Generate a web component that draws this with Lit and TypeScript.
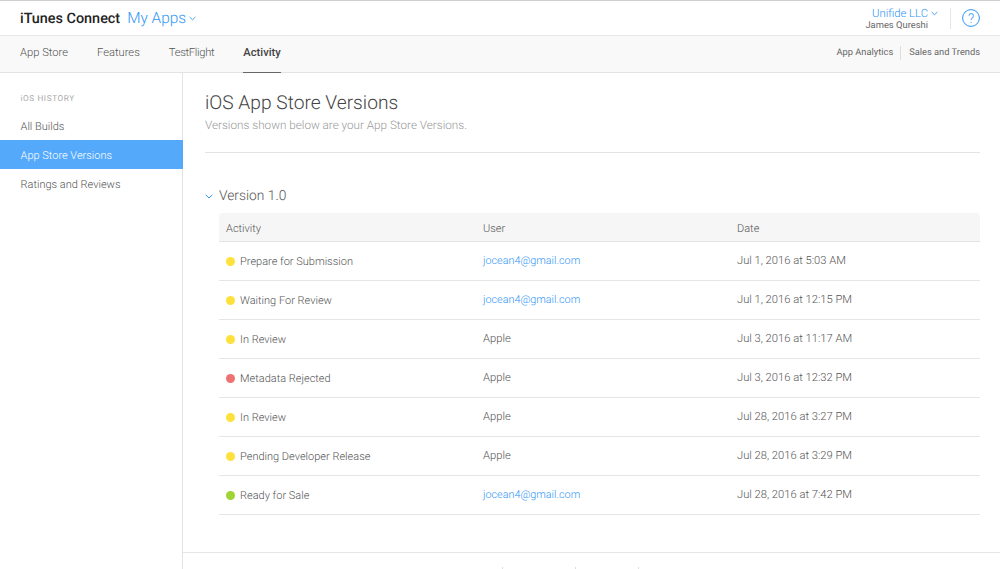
import { LitElement, html, css, svg } from "lit";
import { customElement } from "lit/decorators.js";

const rows = [
  ["Prepare for Submission", "y", "jocean4@gmail.com", "Jul 1, 2016 at 5:03 AM"],
  ["Waiting For Review", "y", "jocean4@gmail.com", "Jul 1, 2016 at 12:15 PM"],
  ["In Review", "y", "Apple", "Jul 3, 2016 at 11:17 AM"],
  ["Metadata Rejected", "r", "Apple", "Jul 3, 2016 at 12:32 PM"],
  ["In Review", "y", "Apple", "Jul 28, 2016 at 3:27 PM"],
  ["Pending Developer Release", "y", "Apple", "Jul 28, 2016 at 3:29 PM"],
  ["Ready for Sale", "g", "jocean4@gmail.com", "Jul 28, 2016 at 7:42 PM"],
];

const chev = (w: number, h: number) => svg`<svg class="chev" width=${w} height=${h} viewBox="0 0 8 5"><path d="M.7.8 4 4 7.3.8" fill="none" stroke="#2f96f5" stroke-width="1"/></svg>`;

@customElement("app-root")
export class AppRoot extends LitElement {
  static styles = css`
    :host { display: block; width: 1000px; height: 569px; overflow: hidden; background: #fff;
      font-family: Roboto, "Liberation Sans", sans-serif; font-weight: 300; color: #555; font-size: 11px;
      text-rendering: geometricPrecision; }
    .top { border-top: 1px solid #cfcfcf; display: flex; align-items: center; padding: 0 20px 0 20px; height: 34px; }
    .brand { font-size: 14.4px; font-weight: 500; color: #222; }
    .apps { font-size: 15.4px; color: #2f96f5; margin-left: 7px; }
    .top .chev { margin-left: 3px; }
    .spacer { flex: 1; }
    .acct { display: flex; flex-direction: column; align-items: flex-end; margin-right: 12px; line-height: 12.5px; padding-top: 4px; }
    .org { color: #2f96f5; font-size: 11.3px; display: flex; align-items: center; }
    .name { font-size: 9.4px; color: #666; margin-right: 10px; font-weight: 400; }
    .help { border-left: 1px solid #e6e6e6; height: 21px; padding-left: 11px; display: flex; align-items: center; }
    .sub { height: 36px; background: #f9f9f9; border-top: 1px solid #e8e8e8; border-bottom: 1px solid #e3e3e3; display: flex; align-items: stretch; padding: 0 20px; }
    .tab { display: flex; align-items: center; margin-right: 29px; color: #555; font-size: 11.2px; box-sizing: border-box; padding-bottom: 3px; }
    .tab.narrow { letter-spacing: -.3px; }
    .tab.on { color: #444; font-weight: 500; border-bottom: 1px solid #666; padding-bottom: 3px; margin-bottom: -1px; }
    .links { margin-left: auto; display: flex; align-items: center; font-size: 9.3px; color: #666; padding-bottom: 3px; font-weight: 400; }
    .links span + span { border-left: 1px solid #ddd; margin-left: 7px; padding-left: 8px; line-height: 14px; }
    .body { display: flex; height: 496px; }
    .side { width: 182px; border-right: 1px solid #e3e3e3; flex: none; padding-top: 21px; }
    .hist { font-size: 8.2px; letter-spacing: .6px; color: #aaa; padding-left: 20.5px; height: 11px; line-height: 11px; font-weight: 400; margin-bottom: 6px; }
    .item { height: 29px; line-height: 31px; padding-left: 20.5px; font-size: 11px; color: #555; }
    .item.on { background: #54a9fb; color: #fff; margin-right: -1px; }
    .main { flex: 1; padding: 0 20px 0 22px; min-width: 0; }
    h1 { margin: 17px 0 0; font-size: 19.2px; font-weight: 300; color: #444; line-height: 25px; }
    .desc { font-size: 11.7px; color: #999; line-height: 15px; margin-top: 3px; }
    hr { border: 0; border-top: 1px solid #e3e3e3; margin: 19px 0 0; }
    .ver { display: flex; align-items: center; height: 20px; margin-top: 33px; font-size: 13.8px; color: #555; }
    .ver .chev { margin-right: 6px; }
    .table { margin: 7px 0 0 14px; }
    .row { display: grid; grid-template-columns: 257px 254px 1fr; align-items: center; box-sizing: border-box; height: 39px; border-bottom: 1px solid #e6e6e6; padding: 0 0 2px 7px; font-size: 11.2px; }
    .head { height: 29px; padding: 2px 0 0 7px; background: #f6f6f6; border-bottom: 1px solid #e3e3e3; border-radius: 4px 4px 0 0; color: #555; font-size: 11px; }
    .act { display: flex; align-items: center; gap: 5.5px; padding-top: 2px; font-size: 11px; }
    .dot { width: 9px; height: 9px; margin-left: -.5px; border-radius: 50%; flex: none; }
    .y { background: #fee13a; } .r { background: #ee7272; } .g { background: #a0d434; }
    .mail { color: #2f96f5; font-size: 10.8px; }
    .foot { border-top: 1px solid #e6e6e6; margin: 37px -20px 0 -22px; display: flex; padding: 14px 0 0 319px; }
    .tick { width: 1px; height: 2px; background: #ddd; flex: none; }
    .t2 { margin-left: 72px; } .t3 { margin-left: 62px; }
  `;
  render() {
    return html`
      <div class="top">
        <span class="brand">iTunes Connect</span><span class="apps">My Apps</span>${chev(7, 5)}
        <span class="spacer"></span>
        <div class="acct">
          <span class="org">Unifide LLC ${chev(7, 5)}</span>
          <span class="name">James Qureshi</span>
        </div>
        <div class="help">
          <svg width="18" height="18" viewBox="0 0 18 18"><circle cx="9" cy="9" r="8.4" fill="none" stroke="#2f96f5"/><text x="9" y="13.6" text-anchor="middle" font-size="13.5" fill="#2f96f5" font-family="Roboto" font-weight="300">?</text></svg>
        </div>
      </div>
      <div class="sub">
        <span class="tab">App Store</span><span class="tab">Features</span><span class="tab narrow">TestFlight</span><span class="tab on">Activity</span>
        <div class="links"><span>App Analytics</span><span>Sales and Trends</span></div>
      </div>
      <div class="body">
        <div class="side">
          <div class="hist">iOS HISTORY</div>
          <div class="item">All Builds</div>
          <div class="item on">App Store Versions</div>
          <div class="item">Ratings and Reviews</div>
        </div>
        <div class="main">
          <h1>iOS App Store Versions</h1>
          <div class="desc">Versions shown below are your App Store Versions.</div>
          <hr />
          <div class="ver">${chev(8, 5)}Version 1.0</div>
          <div class="table">
            <div class="row head"><span>Activity</span><span>User</span><span>Date</span></div>
            ${rows.map(r => html`<div class="row">
              <span class="act"><span class="dot ${r[1]}"></span>${r[0]}</span>
              <span class=${r[2] === "Apple" ? "" : "mail"}>${r[2]}</span>
              <span>${r[3]}</span>
            </div>`)}
          </div>
          <div class="foot"><span class="tick"></span><span class="tick t2"></span><span class="tick t3"></span></div>
        </div>
      </div>`;
  }
}
